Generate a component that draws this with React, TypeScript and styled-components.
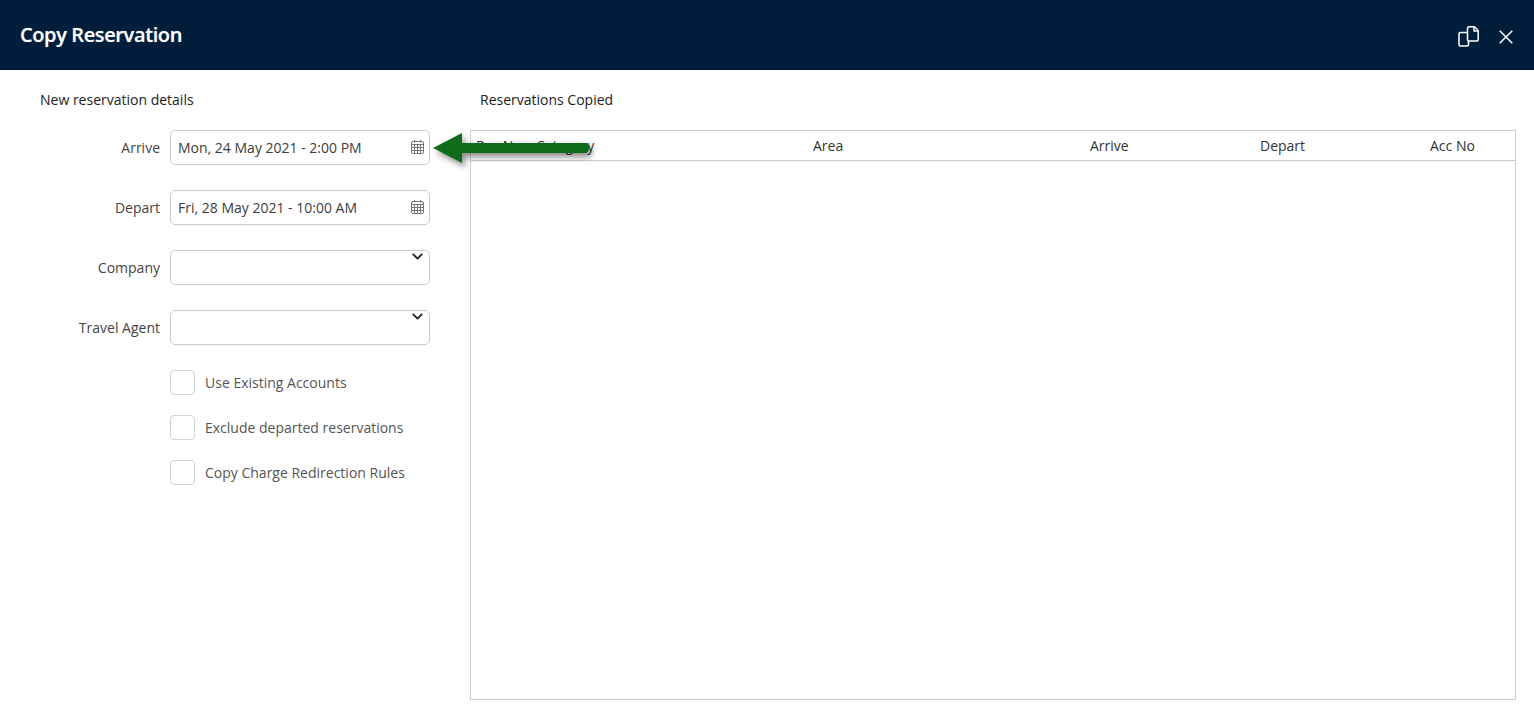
import React from "react";
import styled, { createGlobalStyle } from "styled-components";
import { ChevronDown } from "lucide-react";

const GlobalStyle = createGlobalStyle`
  html, body {
    margin: 0;
    padding: 0;
    background: #fff;
    font-family: "Open Sans", "Liberation Sans", sans-serif;
  }
`;

const Page = styled.div`
  width: 1534px;
  height: 719px;
  overflow: hidden;
  position: relative;
`;

const Header = styled.header`
  height: 70px;
  background: #001e3c;
  display: flex;
  align-items: center;
  justify-content: space-between;
  padding: 0 21px 0 20px;
  box-sizing: border-box;
`;

const Title = styled.h1`
  margin: 0;
  position: relative;
  top: -1px;
  color: #fff;
  font-size: 20px;
  font-weight: 600;
  letter-spacing: -0.38px;
  text-shadow: 0 0 1px rgba(255, 255, 255, 0.5);
`;

const HeaderIcons = styled.div`
  display: flex;
  align-items: center;
  gap: 20px;
  padding-top: 3px;
  color: #fff;
`;

const Body = styled.main`
  display: flex;
  padding: 20px 18px 0 40px;
`;

const LeftColumn = styled.section`
  width: 390px;
  flex: none;
  margin-right: 40px;
`;

const RightColumn = styled.section`
  flex: 1;
`;

const SectionTitle = styled.h2<{ $indent?: number }>`
  margin: 0 0 20px ${(p) => p.$indent ?? 0}px;
  height: 20px;
  line-height: 20px;
  font-size: 14px;
  font-weight: 400;
  color: #222;
`;

const FieldRow = styled.div`
  display: flex;
  align-items: center;
  height: 35px;
  margin-bottom: 25px;
`;

const FieldLabel = styled.label`
  width: 120px;
  margin-right: 10px;
  text-align: right;
  font-size: 14px;
  color: #444;
`;

const Input = styled.div`
  width: 260px;
  height: 35px;
  box-sizing: border-box;
  border: 1px solid #ccc;
  border-radius: 5px;
  padding: 0 4px 0 7px;
  display: flex;
  align-items: center;
  justify-content: space-between;
  font-size: 14px;
  color: #3c3c3c;
`;

const SelectBox = styled(Input)`
  align-items: flex-start;
  justify-content: flex-end;
  padding: 0 3px 0 0;
  color: #222;

  svg {
    margin-top: -3px;
  }
`;

const CheckRow = styled.div`
  display: flex;
  align-items: center;
  height: 25px;
  margin: 0 0 20px 130px;
`;

const CheckBox = styled.span`
  width: 25px;
  height: 25px;
  box-sizing: border-box;
  border: 1px solid #d2d2d2;
  border-radius: 4px;
  margin-right: 10px;
`;

const CheckLabel = styled.span`
  font-size: 14px;
  color: #555;
`;

const Table = styled.div`
  height: 570px;
  box-sizing: border-box;
  border: 1px solid #ccc;
`;

const TableHead = styled.div`
  height: 30px;
  box-sizing: border-box;
  border-bottom: 1px solid #ccc;
  display: grid;
  grid-template-columns: 60px 277px 277px 170px 170px 1fr;
  padding-left: 5px;
  align-items: center;
  font-size: 14px;
  color: #333;
`;

const Arrow = styled.svg`
  position: absolute;
  left: 425px;
  top: 125px;
  overflow: visible;
  filter: drop-shadow(3px 4px 3px rgba(0, 0, 0, 0.45));
`;

const CalendarIcon = () => (
  <svg width="14" height="16" viewBox="0 0 14 16" fill="none" stroke="#777" strokeWidth="1">
    <rect x="0.5" y="1.500" width="12" height="12" rx="1.500" />
    <path d="M0.500 4.500h12M0.500 7.500h12M0.500 10.500h12M3.500 4.500v9M6.500 4.500v9M9.500 4.500v9M3.500 0v2.500M9.500 0v2.500" />
  </svg>
);

const CopyIcon = () => (
  <svg width="21" height="21" viewBox="0 0 21 21" fill="none" stroke="#fff" strokeWidth="1.500" strokeLinejoin="round">
    <path d="M9 6.500H2.500A1.500 1.500 0 0 0 1 8V18.500A1.500 1.500 0 0 0 2.500 20H9A1.500 1.500 0 0 0 10.500 18.500V15" />
    <path d="M11 0.800H16.500L20.200 4.500V13.500A1.500 1.500 0 0 1 18.700 15H11A1.500 1.500 0 0 1 9.500 13.500V2.300A1.500 1.500 0 0 1 11 0.800Z" />
    <path d="M16 1V5H20" />
  </svg>
);

const CloseIcon = () => (
  <svg width="14" height="14" viewBox="0 0 14 14" fill="none" stroke="#fff" strokeWidth="1.500">
    <path d="M0.700 0.700L13.300 13.300M13.300 0.700L0.700 13.300" />
  </svg>
);

const fields = [
  { label: "Arrive", value: "Mon, 24 May 2021 - 2:00 PM" },
  { label: "Depart", value: "Fri, 28 May 2021 - 10:00 AM" },
];

const selects = ["Company", "Travel Agent"];
const checks = ["Use Existing Accounts", "Exclude departed reservations", "Copy Charge Redirection Rules"];
const columns = ["Res No", "Category", "Area", "Arrive", "Depart", "Acc No"];

export default function App() {
  return (
    <Page>
      <GlobalStyle />
      <Header>
        <Title>Copy Reservation</Title>
        <HeaderIcons>
          <CopyIcon />
          <CloseIcon />
        </HeaderIcons>
      </Header>
      <Body>
        <LeftColumn>
          <SectionTitle>New reservation details</SectionTitle>
          {fields.map((f) => (
            <FieldRow key={f.label}>
              <FieldLabel>{f.label}</FieldLabel>
              <Input>
                {f.value}
                <CalendarIcon />
              </Input>
            </FieldRow>
          ))}
          {selects.map((s) => (
            <FieldRow key={s}>
              <FieldLabel>{s}</FieldLabel>
              <SelectBox>
                <ChevronDown size={17} strokeWidth={2.6} />
              </SelectBox>
            </FieldRow>
          ))}
          {checks.map((c) => (
            <CheckRow key={c}>
              <CheckBox />
              <CheckLabel>{c}</CheckLabel>
            </CheckRow>
          ))}
        </LeftColumn>
        <RightColumn>
          <SectionTitle $indent={10}>Reservations Copied</SectionTitle>
          <Table>
            <TableHead>
              {columns.map((c) => (
                <span key={c}>{c}</span>
              ))}
            </TableHead>
          </Table>
        </RightColumn>
      </Body>
      <Arrow width="170" height="50" viewBox="0 0 170 50">
        <path d="M8 23 L37 8 V18 H160 Q164 18 164 23 Q164 28 160 28 H37 V38 Z" fill="#0e6b1a" />
      </Arrow>
    </Page>
  );
}
